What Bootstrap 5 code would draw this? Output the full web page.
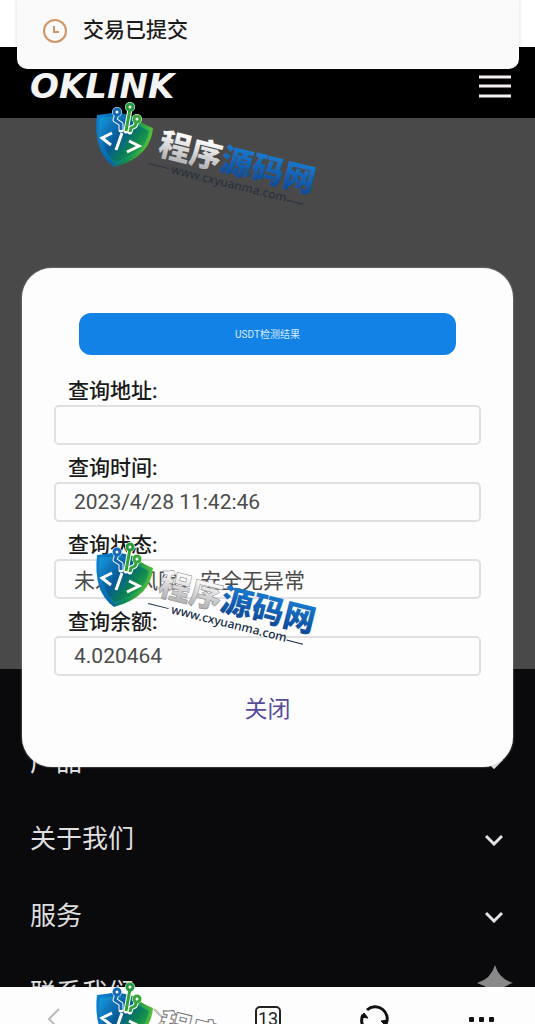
<!DOCTYPE html>
<html lang="zh-CN">
<head>
<meta charset="utf-8">
<meta name="viewport" content="width=device-width, initial-scale=1">
<title>OKLINK</title>
<link href="https://cdn.jsdelivr.net/npm/bootstrap@5.3.0/dist/css/bootstrap.min.css" rel="stylesheet">
<style>
  body { font-family: Roboto, "Noto Sans CJK SC", sans-serif; background: #0a090b; }
  .screen { height: 100vh; }
  .status-strip { height: 47px; background: #fff; }
  .site-bar { height: 71px; background: #000; padding: 7px 24px 0 30px; }
  .wordmark { font: italic bold 34px/1 "DejaVu Sans", sans-serif; color: #f4f4f4; }
  .menu-btn { width: 32px; height: 32px; }
  .dimmed { height: 551px; background: #4a494a; }
  .site-footer { background: #0a090b; padding: 55px 32px 0 30px; min-height: 0; }
  .foot-row { height: 77px; font-size: 26px; color: #dededf; }
  .notice { background: #fafafa; margin: 0 16px 0 17px; height: 69px; border-radius: 0 0 10px 10px; padding: 0 26px 8px; box-shadow: 0 0 5px #0002; }
  .notice-text { font-size: 21px; font-weight: 500; color: #1c1c1c; }
  .dialog-layer { padding: 268px 22px 0; }
  .sheet { background: #fdfdfd; border-radius: 30px; padding: 45px 32px 32px; height: 499px; box-shadow: 0 0 2px #aaa; }
  .title-btn { height: 42px; margin: 0 25px 20px; border-radius: 12px; background: #1282e6; color: #d8ecff; font-size: 10px; }
  .title-btn:hover { background: #1282e6; color: #d8ecff; }
  .field-label { font-size: 21px; font-weight: 500; line-height: 32px; color: #1a1a1a; padding-left: 14px; }
  .field { height: 40px; font-size: 21px; color: #4b4b4b; border: 2px solid #e0e0e2; border-radius: 5px; background: #fdfdfd; padding: 0 18px; margin-top: -2px; }
  .field-group { margin-bottom: 7px; }
  .close-btn { font-size: 23px; line-height: 32px; color: #554a9c; margin-top: 11px; }
  .browser-bar { height: 37px; background: #fdfdfd; }
  .browser-bar button { height: 64px; }
  .stamp { left: 85px; width: 250px; height: 115px; pointer-events: none; }
  .stamp-1 { top: 95px; }
  .stamp-2 { top: 535px; }
  .stamp-3 { top: 975px; }
  .stamp-name { font: 900 32px "Noto Sans CJK SC", sans-serif; }
  .stamp-url { font: 500 12px "Noto Sans", sans-serif; }
  .spark { right: 22px; bottom: 23px; }
</style>
</head>
<body>
<svg width="0" height="0" class="position-absolute" aria-hidden="true">
  <defs>
    <linearGradient id="gShield" x1="0" y1="0.2" x2="1" y2="0.45"><stop offset="0" stop-color="#0b80cf"/><stop offset=".4" stop-color="#0766ab"/><stop offset=".62" stop-color="#0a8a50"/><stop offset="1" stop-color="#5cc531"/></linearGradient>
    <linearGradient id="gInner" x1="0" y1="0" x2="1" y2=".7"><stop offset="0" stop-color="#149be0"/><stop offset=".45" stop-color="#075a98"/><stop offset=".7" stop-color="#0a7c58"/><stop offset="1" stop-color="#2fb52f"/></linearGradient>
    <linearGradient id="gSilver" x1="0" y1="0" x2="0" y2="1"><stop offset="0.300" stop-color="#f8f8f8"/><stop offset="1" stop-color="#a0a0a4"/></linearGradient>
    <linearGradient id="gName" x1="0" y1="0" x2="0" y2="1"><stop offset="0.200" stop-color="#1a7bd0"/><stop offset="1" stop-color="#0b408c"/></linearGradient>
    <symbol id="shield" viewBox="0 0 75 75">
      <path d="M12 20Q23 19 32 17L48 21Q57 29 68 33Q66 62 29 72Q8 57 12 20Z" fill="url(#gShield)"/>
      <path d="M15 23Q25 23 34 21L47 25Q55 32 64 36Q61 58 30 68Q12 54 15 23Z" fill="url(#gInner)" stroke="#1e9fce" stroke-opacity=".4"/>
      <g fill="none" stroke="#fff" stroke-width="5" stroke-linecap="round" stroke-linejoin="round">
        <path d="M32 19L30 25L36 29V35M45 14L41 36M52 26L50 31L46 33L45 37"/>
      </g>
      <g fill="#fff"><circle cx="32" cy="17" r="5"/><circle cx="45" cy="12" r="5"/><circle cx="52" cy="24" r="5"/></g>
      <g fill="none" stroke-width="3" stroke-linejoin="round">
        <path d="M32 19L30 25L36 29V35" stroke="#1268b5"/>
        <path d="M45 14L41 36M52 26L50 31L46 33L45 37" stroke="#2da338"/>
      </g>
      <g fill="#fff" stroke-width="3">
        <circle cx="32" cy="17" r="3" stroke="#1268b5"/><circle cx="45" cy="12" r="3" stroke="#259a3c"/><circle cx="52" cy="24" r="3" stroke="#34a939"/>
      </g>
      <path d="M27 38L17 43L26 50M37 38L31 55M44 46L54 51L42 57" fill="none" stroke="#fff" stroke-width="3"/>
    </symbol>
  </defs>
</svg>

<div class="screen position-relative overflow-hidden d-flex flex-column">
  <div class="status-strip flex-shrink-0"></div>
  <header class="site-bar flex-shrink-0 d-flex justify-content-between align-items-center">
    <a href="#" class="wordmark text-decoration-none">OKLINK</a>
    <button type="button" class="menu-btn btn p-0 border-0 d-flex" aria-label="菜单">
      <svg width="32" height="32" stroke="#f4eff1" stroke-width="3"><path d="M0 7H32M0 16H32M0 26H32"/></svg>
    </button>
  </header>
  <main class="dimmed flex-shrink-0"></main>
  <footer class="site-footer flex-grow-1 overflow-hidden">
    <a href="#" class="foot-row d-flex justify-content-between align-items-center text-decoration-none">产品<svg width="18" height="12" fill="none" stroke="#e4e4e4" stroke-width="3"><path d="M1 2L9 10L17 2"/></svg></a>
    <a href="#" class="foot-row d-flex justify-content-between align-items-center text-decoration-none">关于我们<svg width="18" height="12" fill="none" stroke="#e4e4e4" stroke-width="3"><path d="M1 2L9 10L17 2"/></svg></a>
    <a href="#" class="foot-row d-flex justify-content-between align-items-center text-decoration-none">服务<svg width="18" height="12" fill="none" stroke="#e4e4e4" stroke-width="3"><path d="M1 2L9 10L17 2"/></svg></a>
    <a href="#" class="foot-row d-flex justify-content-between align-items-center text-decoration-none">联系我们</a>
  </footer>
  <nav class="browser-bar flex-shrink-0 row g-0 overflow-hidden" aria-label="浏览器">
    <button type="button" class="col btn p-0 border-0" aria-label="后退"><svg width="28" height="28" fill="none" stroke="#b9b9b9" stroke-width="2"><path d="M19 4L9 14L19 24"/></svg></button>
    <button type="button" class="col btn p-0 border-0" aria-label="前进"><svg width="28" height="28" fill="none" stroke="#b9b9b9" stroke-width="2"><path d="M7 4L17 14L7 24"/></svg></button>
    <button type="button" class="col btn p-0 border-0" aria-label="标签页"><svg width="28" height="28"><rect x="2" y="2" width="24" height="24" rx="4" fill="none" stroke="#222" stroke-width="2"/><text x="14" y="20" text-anchor="middle" font-size="18" fill="#222">13</text></svg></button>
    <button type="button" class="col btn p-0 border-0" aria-label="刷新"><svg width="30" height="28" fill="none" stroke="#111" stroke-width="3"><path d="M7 5A12 12 0 0 1 26 19M21 25A12 12 0 0 1 3 10"/><path d="M1 12L4 8L8 13ZM21 16L25 20L28 15Z" fill="#111" stroke-width="1"/></svg></button>
    <button type="button" class="col btn p-0 border-0" aria-label="更多"><svg width="28" height="28" fill="#111"><rect x="1" y="12" width="5" height="5" rx="1"/><rect x="11" y="12" width="5" height="5" rx="1"/><rect x="21" y="12" width="5" height="5" rx="1"/></svg></button>
  </nav>

  <div class="position-absolute top-0 start-0 w-100">
    <div class="notice d-flex align-items-center" role="status">
      <svg class="me-3 flex-shrink-0" width="24" height="24" fill="none" stroke="#d39463" stroke-width="2"><circle cx="12" cy="12" r="11"/><path d="M11 7V13H16"/></svg>
      <span class="notice-text">交易已提交</span>
    </div>
  </div>

  <div class="dialog-layer position-absolute top-0 start-0 w-100">
    <section class="sheet d-flex flex-column" role="dialog" aria-label="USDT检测结果">
      <button type="button" class="title-btn btn border-0 p-0">USDT检测结果</button>
      <div class="field-group"><label class="field-label d-block" for="addr">查询地址:</label><input id="addr" class="field d-block w-100" type="text"></div>
      <div class="field-group"><label class="field-label d-block" for="time">查询时间:</label><input id="time" class="field d-block w-100" type="text" value="2023/4/28 11:42:46"></div>
      <div class="field-group"><label class="field-label d-block" for="state">查询状态:</label><input id="state" class="field d-block w-100" type="text" value="未发现风险，安全无异常"></div>
      <div class="field-group"><label class="field-label d-block" for="balance">查询余额:</label><input id="balance" class="field d-block w-100" type="text" value="4.020464"></div>
      <button type="button" class="close-btn btn border-0 p-0 align-self-center">关闭</button>
    </section>
  </div>

  <svg class="stamp stamp-1 position-absolute" viewBox="0 0 250 115">
    <use href="#shield" width="75" height="75"/>
    <g transform="rotate(14 70 62)"><text class="stamp-name" x="71" y="59" fill="url(#gSilver)">程序<tspan fill="url(#gName)">源码网</tspan></text><text class="stamp-url" x="89" y="74" fill="#28323d">www.cxyuanma.com</text><path d="M65 70H86M208 72H225" stroke="#28323d"/></g>
  </svg>
  <svg class="stamp stamp-2 position-absolute" viewBox="0 0 250 115">
    <use href="#shield" width="75" height="75"/>
    <g transform="rotate(14 70 62)"><text class="stamp-name" x="71" y="59" fill="url(#gSilver)" stroke="#888" stroke-width=".5">程序<tspan fill="url(#gName)" stroke="none">源码网</tspan></text><text class="stamp-url" x="89" y="74" fill="#122b43">www.cxyuanma.com</text><path d="M65 70H86M208 72H225" stroke="#122b43"/></g>
  </svg>
  <svg class="stamp stamp-3 position-absolute" viewBox="0 0 250 115">
    <use href="#shield" width="75" height="75"/>
    <g transform="rotate(14 70 62)"><text class="stamp-name" x="71" y="59" fill="#fff" stroke="#777" stroke-width="1">程序</text></g>
  </svg>
  <svg class="spark position-absolute" width="36" height="36" fill="#fff" fill-opacity=".52"><path d="M18 0Q22 14 36 18Q22 22 18 36Q14 22 0 18Q14 14 18 0Z"/></svg>
</div>
<script src="https://cdn.jsdelivr.net/npm/bootstrap@5.3.0/dist/js/bootstrap.bundle.min.js"></script>
</body>
</html>
